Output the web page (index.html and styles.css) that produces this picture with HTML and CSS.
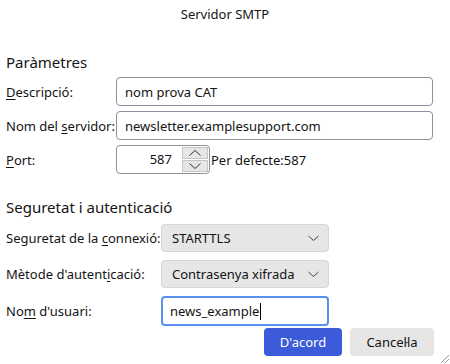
FILE: index.html
```html
<!DOCTYPE html>
<html lang="ca">
<head>
<meta charset="utf-8">
<title>Servidor SMTP</title>
<link rel="stylesheet" href="styles.css">
</head>
<body>
<div class="dialog">
  <div class="title">Servidor SMTP</div>
  <h2 class="section-title first">Paràmetres</h2>
  <div class="grid1">
    <label class="lbl"><u>D</u>escripció:</label>
    <div class="field"><span>nom prova CAT</span></div>
    <label class="lbl">Nom del <u>s</u>ervidor:</label>
    <div class="field"><span>newsletter.examplesupport.com</span></div>
    <label class="lbl"><u>P</u>ort:</label>
    <div class="port-row">
      <div class="spin">
        <span class="spin-val">587</span>
        <div class="spin-btns">
          <div class="sbtn"><svg width="14" height="8" viewBox="0 0 14 8"><path d="M1.5 6.5 L7 1.5 L12.5 6.5" fill="none" stroke="#333" stroke-width="1"/></svg></div>
          <div class="sbtn"><svg width="14" height="8" viewBox="0 0 14 8"><path d="M1.5 1.5 L7 6.5 L12.5 1.5" fill="none" stroke="#333" stroke-width="1"/></svg></div>
        </div>
      </div>
      <span class="default">Per defecte:587</span>
    </div>
  </div>
  <h2 class="section-title second">Seguretat i autenticació</h2>
  <div class="grid2">
    <label class="lbl">Seguretat de la <u>c</u>onnexió:</label>
    <div class="select"><span>STARTTLS</span><svg width="11" height="7" viewBox="0 0 11 7"><path d="M0.5 1 L5.5 5.5 L10.5 1" fill="none" stroke="#444" stroke-width="1"/></svg></div>
    <label class="lbl">Mètode d'autent<u>i</u>cació:</label>
    <div class="select"><span>Contrasenya xifrada</span><svg width="11" height="7" viewBox="0 0 11 7"><path d="M0.5 1 L5.5 5.5 L10.5 1" fill="none" stroke="#444" stroke-width="1"/></svg></div>
    <label class="lbl">No<u>m</u> d'usuari:</label>
    <div class="field focus"><span>news_example</span><span class="caret"></span></div>
  </div>
  <div class="buttons">
    <button class="btn primary">D'acord</button>
    <button class="btn">Cancel·la</button>
  </div>
  <svg class="grip" width="12" height="12" viewBox="0 0 12 12"><path d="M11 3 L3 11 M11 7 L7 11" stroke="#999" stroke-width="1"/></svg>
</div>
</body>
</html>
```
FILE: styles.css
```css
* { box-sizing: border-box; }
html, body { margin: 0; padding: 0; background: #fff; }
body {
  font-family: "Noto Sans", "Open Sans", sans-serif;
  font-size: 13px;
  color: #141414;
  width: 450px;
  height: 364px;
  overflow: hidden;
}
.dialog { position: relative; width: 450px; height: 364px; padding: 0 16px 0 6px; }
.title { text-align: center; height: 26px; line-height: 28px; font-size: 13px; padding-left: 10px; }
.section-title { font-weight: normal; font-size: 15px; margin: 0; line-height: 20px; }
.section-title.first { margin-top: 26px; margin-bottom: 5px; }
.section-title.second { margin-top: 23px; margin-bottom: 7px; }
u { text-decoration-thickness: 1px; text-underline-offset: 2px; }
.grid1 { display: grid; grid-template-columns: 110px 317px; row-gap: 5px; align-items: center; }
.grid2 { display: grid; grid-template-columns: 155px 168px; row-gap: 8px; align-items: center; }
.lbl { white-space: nowrap; }
.field {
  height: 29px; border: 1px solid #8f8f9d; border-radius: 4px; padding: 0 8px;
  display: flex; align-items: center; background: #fff;
}
.field.focus { border: 2px solid #5b8fef; padding: 0 7px; height: 30px; }
.caret { display: inline-block; width: 1px; height: 17px; background: #000; margin-left: 1px; }
.port-row { display: flex; align-items: center; }
.spin {
  width: 94px; height: 29px; border: 1px solid #8f8f9d; border-radius: 4px;
  display: flex; align-items: stretch; overflow: hidden;
}
.spin-val { flex: 1; text-align: right; padding-right: 10px; line-height: 27px; }
.spin-btns { width: 27px; display: flex; flex-direction: column; padding: 1px 1px 1px 0; gap: 1px; }
.sbtn { flex: 1; background: #e6e6e6; border: 1px solid #c6c6c6; display: flex; align-items: center; justify-content: center; }
.default { margin-left: 1px; }
.select {
  height: 28px; background: #e6e6e6; border-radius: 4px; border: 1px solid #d6d6d6;
  display: flex; align-items: center; justify-content: space-between; padding: 0 9px 0 10px;
}
.buttons { display: flex; justify-content: flex-end; gap: 8px; margin-top: 2px; }
.btn {
  font: inherit; font-size: 13px; height: 28px; border: none; border-radius: 4px;
  background: #e6e6e6; color: #141414; padding: 0; width: 84px;
}
.btn.primary { background: #3b5bdb; color: #fff; width: 78px; }
.grip { position: absolute; right: 0; bottom: 0; }
```
